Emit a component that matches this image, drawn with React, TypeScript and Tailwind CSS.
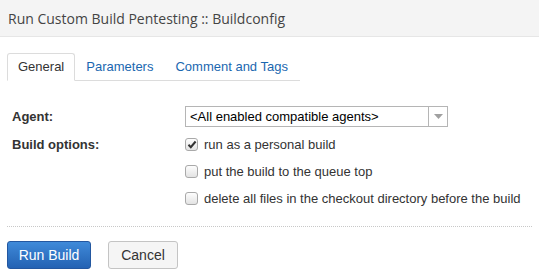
const font = { fontFamily: '"Liberation Sans", Arial, sans-serif' }

function Check({ checked }: { checked?: boolean }) {
  return (
    <span className="w-[13px] h-[13px] rounded-[3px] border border-[#a9a9a9] bg-gradient-to-b from-[#fdfdfd] to-[#e3e3e3] flex items-center justify-center shrink-0">
      {checked ? (
        <svg width="10" height="9" viewBox="0 0 10 9">
          <path d="M1.5 4.8 L3.8 7.2 L8.6 1.5" fill="none" stroke="#333" strokeWidth="2" />
        </svg>
      ) : null}
    </span>
  )
}

export default function App() {
  const options = [
    { label: 'run as a personal build', checked: true },
    { label: 'put the build to the queue top' },
    { label: 'delete all files in the checkout directory before the build' },
  ]

  return (
    <div className="w-[539px] h-[277px] bg-white text-[#333]" style={font}>
      <div className="h-[37px] bg-[#f4f4f4] border-b border-[#e6e6e6] pl-2 flex items-center">
        <h1 className="text-[14px] text-[#444] font-['Open_Sans',sans-serif] whitespace-nowrap">
          Run Custom Build Pentesting :: Buildconfig
        </h1>
      </div>

      <div className="px-[7px]">
        <div className="mt-[17px] w-[293px] flex items-end border-b border-[#dcdcdc] h-[27px] text-[13px] whitespace-nowrap">
          <div className="h-[28px] -mb-px px-[10px] border border-[#dcdcdc] border-b-white bg-white rounded-t-[3px] flex items-center text-[#333]">
            General
          </div>
          <div className="h-[27px] px-[11px] flex items-center text-[#1a67b0]">Parameters</div>
          <div className="h-[27px] px-[11px] flex items-center text-[#1a67b0]">Comment and Tags</div>
        </div>

        <div className="mt-[25px] grid grid-cols-[178px_1fr] text-[13px]">
          <div className="pl-[5px] font-bold h-[21px] flex items-center">Agent:</div>
          <div className="h-[21px] w-[263px] border border-[#b5b5b5] flex">
            <div className="flex-1 pl-[4px] flex items-center text-black">&lt;All enabled compatible agents&gt;</div>
            <div className="w-[19px] border-l border-[#b5b5b5] flex items-center justify-center">
              <svg width="9" height="5" viewBox="0 0 9 5">
                <path d="M0 0 H9 L4.5 5 Z" fill="#a0a0a0" />
              </svg>
            </div>
          </div>

          <div className="pl-[5px] font-bold mt-[8px] h-[19px] flex items-center">Build options:</div>
          <div className="mt-[8px] flex flex-col gap-[8px]">
            {options.map((o) => (
              <label key={o.label} className="h-[19px] flex items-center gap-[6px]">
                <Check checked={o.checked} />
                <span>{o.label}</span>
              </label>
            ))}
          </div>
        </div>

        <div className="mt-[18px] w-[525px] border-t border-dotted border-[#c8c8c8]" />

        <div className="mt-[14px] flex gap-[17px] text-[14px]">
          <button className="w-[84px] h-[28px] rounded-[3px] border border-[#2357a0] bg-gradient-to-b from-[#3f8ad9] to-[#2462b3] text-white">
            Run Build
          </button>
          <button className="w-[70px] h-[28px] rounded-[3px] border border-[#c4c4c4] bg-[#f5f5f5] text-[#333]">
            Cancel
          </button>
        </div>
      </div>
    </div>
  )
}
